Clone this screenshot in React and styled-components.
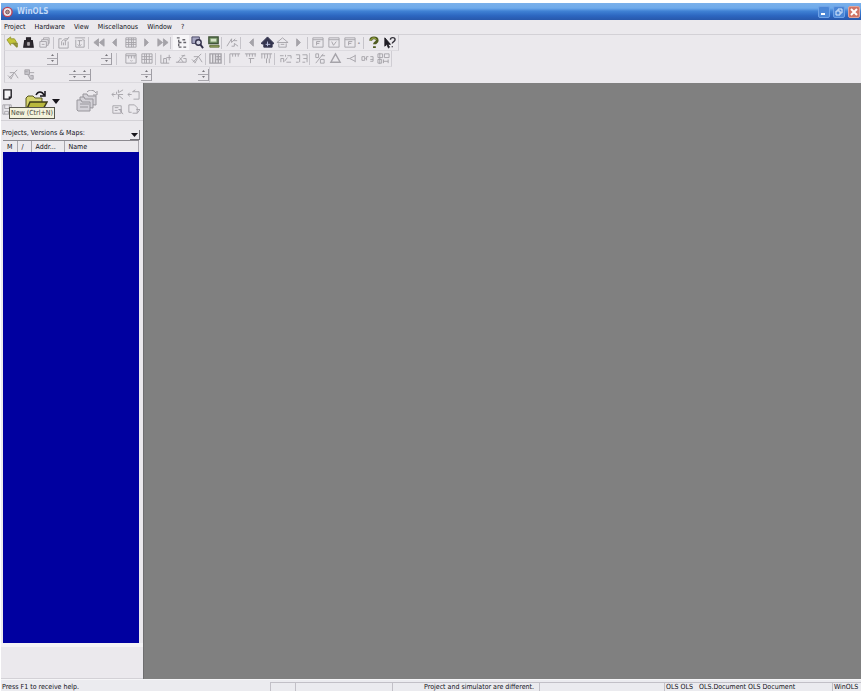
import styled, { createGlobalStyle } from "styled-components";

const GlobalStyle = createGlobalStyle`
    * {
        box-sizing: border-box;
    }

    body {
        margin: 0;
        background: #ffffff;
        font-family: "DejaVu Sans Condensed", "Liberation Sans", sans-serif;
        font-size: 7px;
        color: #101018;
    }

    button {
        font: inherit;
        color: inherit;
        padding: 0;
        border: none;
        background: none;
    }
`;

const SWindow = styled.div`
    height: 100vh;
    padding: 3px 3px 0 1px;
    display: flex;
    flex-direction: column;
    overflow: hidden;
`;

const STitleBar = styled.header`
    height: 17px;
    flex: none;
    padding: 0 1px;
    display: flex;
    align-items: center;
    gap: 4px;
    background: linear-gradient(#7ab0ea 0%, #6eaaeb 30%, #3f81d4 48%, #2c66c0 75%, #2858ab 100%);

    h1 {
        flex: 1;
        margin: 0;
        color: #c3daf7;
        font-family: "DejaVu Sans Condensed", sans-serif;
        font-size: 8px;
        font-weight: bold;
    }
`;

const SWindowButton = styled.button`
    width: 12px;
    height: 12px;
    margin-left: -1px;
    display: flex;
    border-radius: 2px;
    border: 1px solid ${({ $close }) => ($close ? "#e0a49c" : "#6fa2e6")};
    background: ${({ $close }) => ($close ? "#cf7465" : "#4a86d6")};
`;

const SMenu = styled.nav`
    height: 15px;
    flex: none;
    padding-left: 3px;
    display: flex;
    align-items: center;
    gap: 9px;
    background: #ebe9ed;
    border-bottom: 1px solid #d3d1d6;
`;

const SToolbars = styled.div`
    flex: none;
    padding-left: 3px;
    background: #ebe9ed;
`;

const SToolbar = styled.div`
    width: ${({ $width }) => $width}px;
    height: 16px;
    display: flex;
    align-items: center;
    border-left: 1px solid #cfcdd3;
    border-right: 1px solid #cfcdd3;
    border-bottom: 1px solid #dcdadf;
`;

const SSeparator = styled.span`
    width: 3px;
    height: 12px;
    flex: none;
    border-left: 1px solid #c6c4ca;
`;

const SGap = styled.span`
    width: ${({ $width }) => $width}px;
    flex: none;
`;

const STool = styled.button`
    flex: 1;
    min-width: 0;
    height: 15px;
    display: flex;
    align-items: center;
    justify-content: center;
    background: ${({ $pressed }) => ($pressed ? "#f7f6f8" : "none")};
`;

const SSpin = styled.div`
    width: ${({ $wide }) => ($wide ? 22 : 11)}px;
    flex: none;
    display: grid;
    grid-template-columns: repeat(${({ $wide }) => ($wide ? 2 : 1)}, 1fr);
    border-right: 1px solid #a09ea5;

    button {
        height: 6px;
        display: flex;
        align-items: center;
        justify-content: center;
        border-bottom: 1px solid #a9a7ad;
    }
`;

const SBody = styled.div`
    flex: 1;
    min-height: 0;
    display: flex;
`;

const SSidebar = styled.aside`
    width: 142px;
    flex: none;
    display: flex;
    flex-direction: column;
    background: #ebe9ed;
`;

const SWorkspace = styled.main`
    flex: 1;
    background: #808080;
    border-left: 1px solid #6e6e70;
`;

const SFileBar = styled.div`
    height: 38px;
    position: relative;
    display: flex;
    align-items: center;
    border-bottom: 1px solid #d3d1d6;
`;

const SFileColumn = styled.div`
    width: ${({ $width }) => $width}px;
    display: grid;
    grid-template-columns: repeat(${({ $columns }) => $columns}, 1fr);
    gap: 2px 0;
    justify-items: center;
`;

const SFileButton = styled.button`
    display: flex;
`;

const STooltip = styled.span`
    position: absolute;
    left: 8px;
    top: 24px;
    height: 12px;
    padding: 0 1px;
    line-height: 10px;
    color: #45453a;
    border: 1px solid #55554c;
    background: #f3f2dc;
`;

const SListTitle = styled.div`
    height: 19px;
    padding: 0 3px 0 1px;
    display: flex;
    align-items: flex-end;
    justify-content: space-between;

    h2 {
        margin: 0;
        padding-bottom: 3px;
        font-size: 7px;
        font-weight: normal;
    }

    button {
        width: 10px;
        height: 10px;
        display: flex;
        align-items: center;
        justify-content: center;
        border-right: 1px solid #77757b;
        border-bottom: 1px solid #77757b;
    }
`;

const SList = styled.div`
    flex: 1;
    margin: 0 4px 0 2px;
    border-top: 1px solid #8c8a90;
    background: #0000a0;
`;

const STable = styled.table`
    width: 100%;
    table-layout: fixed;
    border-collapse: collapse;

    th {
        height: 11px;
        padding: 0 0 0 4px;
        line-height: 10px;
        font-weight: normal;
        text-align: left;
        background: #ebe9ed;
        border-right: 1px solid #a9a7ad;
        white-space: nowrap;
    }
`;

const SSidebarFoot = styled.div`
    height: 36px;
    flex: none;
    border-top: 4px solid #f4f3f5;
    border-bottom: 1px solid #d3d1d6;
`;

const SStatusBar = styled.footer`
    height: 12px;
    flex: none;
    display: flex;
    align-items: flex-end;
    background: #ebebef;
    border-top: 1px solid #f6f6f8;
    white-space: nowrap;
`;

const SStatus = styled.span`
    height: 9px;
    line-height: 9px;
    padding: 0 ${({ $right }) => ($right ? 5 : 0)}px 0 1px;
    flex: ${({ $width }) => ($width ? `0 0 ${$width}px` : "1")};
    text-align: ${({ $right }) => ($right ? "right" : "left")};
    border: solid ${({ $plain }) => ($plain ? "transparent" : "#c2c0c7")};
    border-width: 1px 0 0 ${({ $plain }) => ($plain ? 0 : 1)}px;
`;

const GRAY = "#a5a3a9";

/* desenhos dos botoes, todos em uma grade de 14x14 */
const icons = {
    undo: <><path d="M1 4l4-3v2h4l2 3v4L8 8H5v2z" fill="#c3c437" stroke="#9b9c38" /><path d="M7 8h5v4M8 8l4 4" stroke="#8c8c34" strokeWidth="1.5" /></>,
    bag: <><path d="M3 5h8l1 7H2z M5 5V2h4v3" fill="#302c32" stroke="#252127" strokeWidth="1.5" /><path d="M6 7h2v3H6z" fill="#b8a9a9" /></>,
    copies: <path d="M2 6h7v6H2z M4 6V4h7v6H9 M6 4V2h6v6h-1 M4 9h3" />,
    chartUp: <path d="M2 3h3m3 0h4M2 3v10h10V6 M5 10V6m2 4V7m2 3V5 M5 6l2-2 3 1 3-4" />,
    chartDown: <path d="M2 2h11 M3 4v8h9V4 M5 5h5M7 5v5m-2-1l2 2 2-2M10 3l2 2" />,
    first: <path d="M7 3v8L2 7zM13 3v8L8 7z" fill={GRAY} />,
    prev: <path d="M9 3v8L5 7z" fill={GRAY} />,
    grid: <path d="M2 2h11v10H2z M2 4h11M2 7h11M2 9h11M5 2v10M8 2v10M10 2v10" />,
    next: <path d="M5 3v8l4-4z" fill={GRAY} />,
    last: <path d="M2 3v8l5-4zM8 3v8l5-4z" fill={GRAY} />,
    tree: <path d="M2 2h3M4 4v8M4 7h3m-3 5h3M8 4h4M9 7h4M9 12h4" stroke="#66646b" strokeWidth="1.5" strokeDasharray="3 1" />,
    search: <><path d="M1 1h8v7H1z" fill="#a7a7c2" stroke="#484664" /><circle cx="8" cy="7" r="3" fill="#d5d5e5" stroke="#33314a" strokeWidth="1.5" /><path d="M10 9l3 4" stroke="#33314a" strokeWidth="2" /></>,
    device: <><path d="M2 1h10v7H2z" fill="#79986a" stroke="#42553a" strokeWidth="1.5" /><path d="M4 3h6v3H4z" fill="#d6e3c8" stroke="none" /><path d="M3 10h10v2H3z" fill="#9aa760" stroke="#5d6d37" /></>,
    lines: <path d="M1 11l5-8v4l4-4M6 11h3V8l4 3M8 5h4" />,
    home: <><path d="M0 8l7-7 7 7-2 1v3H3V9z" fill="#34344e" stroke="#34344e" /><path d="M5 9h5M7 6v5" stroke="#bdc3e0" /></>,
    homeOff: <path d="M1 7l6-5 6 5H1zM3 8v4h8V8M5 9h4" />,
    boxF: <path d="M2 2h11v10H2zM2 4h11M6 10V6h4M6 8h3" />,
    boxV: <path d="M2 2h11v10H2zM2 4h11M5 6l2 4 3-4" />,
    help: <><path d="M4 5c0-4 7-4 7 0 0 2-3 2-3 4M8 11v2" stroke="#4f5b20" strokeWidth="3" /><path d="M4 5c0-3 5-4 6-1" stroke="#b8c752" /></>,
    pointer: <><path d="M2 2v9l2-2 2 4 1-1-2-3h3z" fill="#1f1d24" stroke="#1f1d24" /><path d="M8 4c0-3 5-3 5 0 0 2-3 2-3 4M10 11v1" stroke="#33313a" strokeWidth="1.5" /></>,
    frame: <path d="M2 2h11v10H2zM2 4h11M5 4v3m3-3v3m3-3v3M7 9l1 1 1-1" />,
    columns: <path d="M2 2h11v10H2zM2 5h11M2 8h11M5 2v10M7 2v10M10 2v10" />,
    level: <path d="M2 3v9h9M5 12V7h3v5M8 6h5M11 3v6" />,
    slope: <path d="M1 11h11M3 11l7-8M7 4h4M5 6l4 5M9 7h3v4" />,
    gridDark: <path d="M1 2h12v10H1zM4 2v10M7 2v10M8 5h5M8 8h5M10 2v10" strokeWidth="1.5" />,
    ruler: <path d="M2 12V2h11M5 2v3M8 2v3M11 2v3" />,
    rulerMid: <path d="M1 2h12M3 2v3m3-3v3m3-3v3m3-3v3M5 7h6M7 7v5" />,
    rulerFull: <path d="M1 2h12M2 2v5m3-5v5m3-5v5m3-5v5M7 7v5m3-5v5" />,
    link: <path d="M1 4h4m4 0h4v3M2 11V7h3v4m3 0h5M7 3v2m-1 5l3-4" />,
    pair: <path d="M1 3h4v4H2m6-4h5v4H9M5 7v4m8-4v4M1 11h3m4 0h3" />,
    percent: <path d="M11 2L3 12M3 2h3v4H3zM8 8h4v4H8zM9 4h4" />,
    delta: <path d="M7 2L2 11h10z" strokeWidth="1.5" />,
    less: <path d="M11 3v8M11 4L5 7l6 3M2 7h3" />,
    org: <path d="M1 5h3v4H1zM6 9V5h2M10 5h3v5h-3M10 8h3M4 7h1" />,
    hex: <path d="M1 2h5v4H1zM8 2h5v4H8zM1 8h4v4H1zM7 8v4m0-2h5m0-2v4M3 1v12" />,
    cut: <path d="M2 11l9-9M3 5h5l4 6M1 8l4 4M7 7l-3 5" />,
    plug: <path d="M2 2h5v5H2zM7 5h5M5 7l3 5h3V8H8M2 4h3" fill="#c6c4ca" />,
    page: <path d="M3 2h8v8l-2 2H3zM11 10H9v2" fill="#f5f4f6" stroke="#242228" strokeWidth="1.5" />,
    disk: <path d="M2 2h9v10H2zM4 2v4h5V2M4 12V9h4v3" />,
    swap: <path d="M1 7h4M3 5L1 7l2 2M8 2v3l5-3M7 7l6 5M8 12V7h5M6 4v3" />,
    pageIn: <path d="M6 4h7v8H7M1 7h4M3 5L1 7l2 2M6 4l3-2" />,
    pageFind: <path d="M2 3h9v8H2zM4 5h4M4 8h3M9 7l4 5M8 7h3v3" />,
    pageOut: <path d="M2 10V2h6l3 3v6H6M10 7h4l-3 4M2 10h3" />,
};

function Icon({ name, size = 13 }) {
    return (
        <svg width={size} height={size} viewBox="0 0 14 14" fill="none" stroke={GRAY} strokeWidth="1" aria-hidden="true">
            {icons[name]}
        </svg>
    );
}

const mainTools = [
    ["undo", "bag", "copies"],
    ["chartUp", "chartDown"],
    ["first", "prev", "grid", "next", "last"],
    ["tree", "search", "device"],
    ["lines"],
    ["prev", "home", "homeOff", "next"],
    ["boxF", "boxV", "boxF"],
];

const mapTools = [
    ["frame", "columns"],
    ["level", "slope", "cut"],
    ["gridDark"],
    ["ruler", "rulerMid", "rulerFull"],
    ["link", "pair"],
    ["percent", "delta", "less", "org", "hex"],
];

/**
 * Grupos de botoes com um separador entre eles
 * @param {String[][]} groups Nomes dos icones de cada grupo
 */
function ToolGroups({ groups }) {
    return groups.map((group, index) => [
        index > 0 && <SSeparator key={"s" + index} />,
        ...group.map((name, i) => (
            <STool key={index + "-" + i} $pressed={name === "tree"} aria-label={name}>
                <Icon name={name} />
            </STool>
        )),
    ]);
}

function Spin({ wide }) {
    const arrows = wide ? ["up", "right", "down", "left"] : ["up", "down"];
    return (
        <SSpin $wide={wide}>
            {arrows.map((arrow) => (
                <button key={arrow} aria-label={arrow}>
                    <svg width="3" height="2" viewBox="0 0 3 2" aria-hidden="true">
                        <path d={arrow === "up" || arrow === "right" ? "M0 2h3L1.5 0z" : "M0 0h3L1.5 2z"} fill="#77757b" />
                    </svg>
                </button>
            ))}
        </SSpin>
    );
}

function TitleBar() {
    return (
        <STitleBar>
            <svg width="11" height="12" viewBox="0 0 12 12" aria-hidden="true">
                <circle cx="6" cy="6" r="5" fill="#efe4e6" stroke="#bd4355" strokeWidth="1.5" />
                <circle cx="6" cy="6" r="2" fill="#b98f8c" stroke="#6f5560" />
            </svg>
            <h1>WinOLS</h1>
            <SWindowButton aria-label="Minimize">
                <svg width="10" height="10" viewBox="0 0 10 10" aria-hidden="true">
                    <path d="M2 7h4" stroke="#ffffff" strokeWidth="2" />
                </svg>
            </SWindowButton>
            <SWindowButton aria-label="Restore">
                <svg width="10" height="10" viewBox="0 0 10 10" fill="none" stroke="#dbe9fb" aria-hidden="true">
                    <path d="M4 4V2h4v4H6M2 4h4v4H2z" />
                </svg>
            </SWindowButton>
            <SWindowButton $close aria-label="Close">
                <svg width="10" height="10" viewBox="0 0 10 10" aria-hidden="true">
                    <path d="M2 2l6 6M8 2L2 8" stroke="#ffffff" strokeWidth="2" />
                </svg>
            </SWindowButton>
        </STitleBar>
    );
}

function FileBar() {
    return (
        <SFileBar>
            <SFileColumn $width={13} $columns={1}>
                <SFileButton aria-label="New"><Icon name="page" /></SFileButton>
                <SFileButton aria-label="Save"><Icon name="disk" /></SFileButton>
            </SFileColumn>
            <SGap $width={10} />
            <SFileButton aria-label="Open">
                <svg width="24" height="24" viewBox="0 0 24 24" aria-hidden="true">
                    <path d="M2 20V8l2-2h5l2 2h7v4" fill="#d4d36c" stroke="#55541f" />
                    <path d="M2 21l4-9h17l-5 9z" fill="#b9b93d" stroke="#3f3e1a" strokeWidth="1.5" />
                    <path d="M12 5c2-4 6-4 8 0M21 1v5h-5" fill="none" stroke="#17151b" strokeWidth="1.5" />
                </svg>
            </SFileButton>
            <SGap $width={4} />
            <SFileButton aria-label="Recent files">
                <svg width="8" height="5" viewBox="0 0 8 5" aria-hidden="true"><path d="M0 0h8L4 5z" fill="#17151b" /></svg>
            </SFileButton>
            <SGap $width={15} />
            <SFileButton aria-label="Open all">
                <svg width="24" height="24" viewBox="0 0 24 24" fill="#d4d2d8" stroke="#98969c" aria-hidden="true">
                    <path d="M8 14V4h4l1 2h8v9z" />
                    <path d="M5 17V7h4l1 2h8v9z" />
                    <path d="M2 20V10h4l1 2h8v9H3z" />
                    <path d="M5 14h9M5 17h8" />
                    <path d="M12 2c3-3 7-2 9 1M22 1v4h-4" fill="none" />
                </svg>
            </SFileButton>
            <SGap $width={10} />
            <SFileColumn $width={32} $columns={2}>
                {["swap", "pageIn", "pageFind", "pageOut"].map((name) => (
                    <SFileButton key={name} aria-label={name}><Icon name={name} /></SFileButton>
                ))}
            </SFileColumn>
            <STooltip role="tooltip">New (Ctrl+N)</STooltip>
        </SFileBar>
    );
}

function Sidebar() {
    return (
        <SSidebar>
            <FileBar />
            <SListTitle>
                <h2>Projects, Versions &amp; Maps:</h2>
                <button aria-label="List options">
                    <svg width="7" height="4" viewBox="0 0 7 4" aria-hidden="true"><path d="M0 0h7L3.5 4z" fill="#17151b" /></svg>
                </button>
            </SListTitle>
            <SList>
                <STable>
                    <colgroup>
                        <col width="14" />
                        <col width="14" />
                        <col width="33" />
                        <col />
                    </colgroup>
                    <thead>
                        <tr>
                            <th>M</th>
                            <th>/</th>
                            <th>Addr...</th>
                            <th>Name</th>
                        </tr>
                    </thead>
                </STable>
            </SList>
            <SSidebarFoot />
        </SSidebar>
    );
}

const menus = ["Project", "Hardware", "View", "Miscellanous", "Window", "?"];

function App() {
    return (
        <SWindow>
            <GlobalStyle />
            <TitleBar />
            <SMenu>
                {menus.map((menu) => <button key={menu}>{menu}</button>)}
            </SMenu>
            <SToolbars>
                <SToolbar $width={395}>
                    <ToolGroups groups={mainTools} />
                    <span>-</span>
                    <SGap $width={3} />
                    <SSeparator />
                    <ToolGroups groups={[["help", "pointer"]]} />
                </SToolbar>
                <SToolbar $width={388}>
                    <SGap $width={42} />
                    <Spin />
                    <SGap $width={43} />
                    <Spin />
                    <SGap $width={4} />
                    <SSeparator />
                    <SGap $width={4} />
                    <ToolGroups groups={mapTools} />
                </SToolbar>
                <SToolbar $width={206}>
                    <STool aria-label="Cut"><Icon name="cut" /></STool>
                    <STool aria-label="Connect"><Icon name="plug" /></STool>
                    <SGap $width={31} />
                    <Spin wide />
                    <SGap $width={50} />
                    <Spin />
                    <SGap $width={46} />
                    <Spin />
                </SToolbar>
            </SToolbars>
            <SBody>
                <Sidebar />
                <SWorkspace />
            </SBody>
            <SStatusBar>
                <SStatus $plain>Press F1 to receive help.</SStatus>
                <SStatus $width={25} />
                <SStatus $width={97} />
                <SStatus $width={147} $right>Project and simulator are different.</SStatus>
                <SStatus $width={125} />
                <SStatus $width={168}>OLS OLS &nbsp; OLS.Document OLS Document</SStatus>
                <SStatus $width={29}>WinOLS</SStatus>
            </SStatusBar>
        </SWindow>
    );
}

export default App;
